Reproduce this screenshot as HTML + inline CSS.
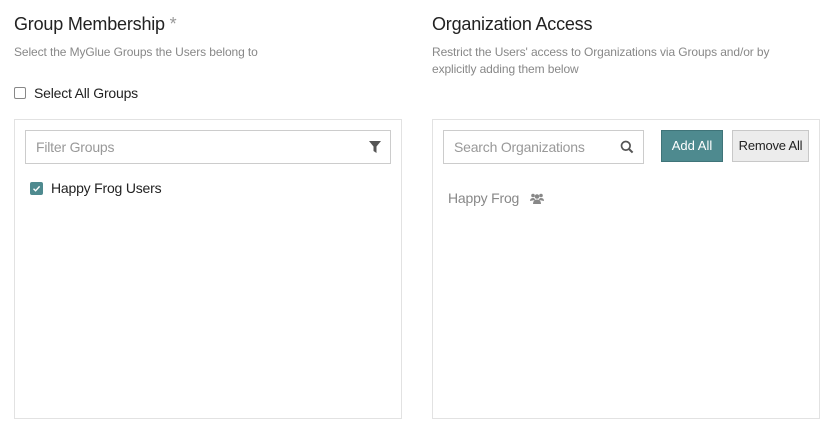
<!DOCTYPE html>
<html><head><style>
body{margin:0;width:833px;height:430px;background:#fff;font-family:"Liberation Sans",sans-serif;position:relative;overflow:hidden}
.a{position:absolute}
h2{position:absolute;margin:0;font-weight:normal;font-size:18px;color:#222;letter-spacing:-0.2px}
.sub{font-size:12px;color:#888;line-height:17px;letter-spacing:-0.1px}
.panel{position:absolute;border:1px solid #e2e2e2;box-sizing:border-box}
.inp{position:absolute;border:1px solid #ccc;box-sizing:border-box;font-size:14px;color:#999;padding-left:10px;line-height:32px;letter-spacing:-0.2px}
</style></head><body>
<h2 style="left:14px;top:14px">Group Membership <span style="color:#999">*</span></h2>
<div class="a sub" style="left:14px;top:44px">Select the MyGlue Groups the Users belong to</div>
<div class="a" style="left:14px;top:87px;width:10px;height:10px;border:1px solid #888;border-radius:2px"></div>
<div class="a" style="left:34px;top:85px;font-size:14px;color:#222;letter-spacing:-0.2px">Select All Groups</div>
<div class="panel" style="left:14px;top:119px;width:388px;height:300px"></div>
<div class="inp" style="left:25px;top:130px;width:366px;height:34px">Filter Groups</div>
<svg class="a" style="left:369px;top:141px" width="12" height="12" viewBox="0 0 12 12"><path d="M0 0H12L7.5 5.5V12L4.5 10V5.5Z" fill="#555"/></svg>
<div class="a" style="left:30px;top:182px;width:13px;height:13px;background:#4e8a8f;border-radius:2px"></div>
<svg class="a" style="left:30px;top:182px" width="13" height="13"><path d="M3.5 6.8L5.6 8.8L9.6 4.4" stroke="#fff" stroke-width="1.4" fill="none"/></svg>
<div class="a" style="left:51px;top:180px;font-size:14px;color:#222;letter-spacing:-0.2px">Happy Frog Users</div>

<h2 style="left:432px;top:14px">Organization Access</h2>
<div class="a sub" style="left:432px;top:44px;width:380px">Restrict the Users' access to Organizations via Groups and/or by explicitly adding them below</div>
<div class="panel" style="left:432px;top:119px;width:388px;height:300px"></div>
<div class="inp" style="left:443px;top:130px;width:201px;height:34px">Search Organizations</div>
<svg class="a" style="left:620px;top:140px" width="14" height="14" viewBox="0 0 14 14"><circle cx="5.8" cy="5.8" r="4.3" stroke="#555" stroke-width="1.7" fill="none"/><path d="M9 9L12.6 12.6" stroke="#555" stroke-width="2"/></svg>
<div class="a" style="left:661px;top:130px;width:62px;height:32px;background:#4e8a8f;border:1px solid #3f7479;box-sizing:border-box;color:#fff;font-size:13px;text-align:center;line-height:30px">Add All</div>
<div class="a" style="left:732px;top:130px;width:77px;height:32px;background:#ececec;border:1px solid #c8c8c8;box-sizing:border-box;color:#222;font-size:13px;text-align:center;line-height:30px;letter-spacing:-0.2px">Remove All</div>
<div class="a" style="left:448px;top:190px;font-size:14px;color:#888;letter-spacing:-0.2px">Happy Frog</div>
<svg class="a" style="left:530px;top:193px" width="14" height="11" viewBox="0 0 14 11"><circle cx="3" cy="2.5" r="1.8" fill="#888"/><circle cx="11" cy="2.5" r="1.8" fill="#888"/><circle cx="7" cy="3.5" r="2.3" fill="#888"/><path d="M0 8Q0 5 3 5Q5 5 5 7Z M14 8Q14 5 11 5Q9 5 9 7Z M3 11Q3 6.5 7 6.5Q11 6.5 11 11Z" fill="#888"/></svg>
</body></html>
